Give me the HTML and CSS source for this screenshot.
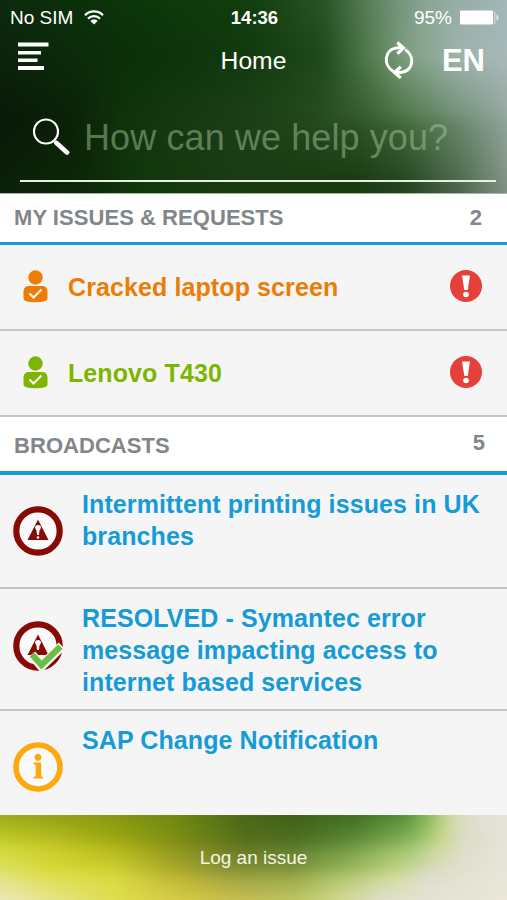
FILE: index.html
```html
<!DOCTYPE html>
<html lang="en">
<head>
    <meta charset="UTF-8">
    <title>Home</title>
    <link rel="stylesheet" href="styles.css">
</head>
<body>
    <header class="header">
        <div class="backdrop">
            <div class="glow header-glow-4"></div>
            <div class="glow header-glow-3"></div>
            <div class="glow header-glow-2"></div>
            <div class="glow header-glow-1"></div>
        </div>

        <div class="status-bar">
            <div class="status-left">
                <span>No SIM</span>
                <svg width="20" height="15" viewBox="0 0 20 15" fill="none" stroke="#fff" stroke-width="2.2">
                    <path d="M1 5.2C6 .2 14 .2 19 5.2"/>
                    <path d="M4 8.6c3.4-3.4 8.600-3.400 12 0"/>
                    <path d="M10 14.500L6.400 11c2-1.900 5.200-1.900 7.200 0z" fill="#fff" stroke="none"/>
                </svg>
            </div>
            <b class="status-time">14:36</b>
            <div class="status-right">
                <span>95%</span>
                <svg width="39" height="15" viewBox="0 0 39 15" fill="#fff">
                    <rect x="0" y="0.500" width="33" height="14" rx="1"/>
                    <path d="M34 1q1.500 0 1.500 2v9q0 2-1.500 2z" opacity=".4"/>
                    <path d="M36.500 4.500q2 1 2 3t-2 3z" opacity=".8"/>
                </svg>
            </div>
        </div>

        <nav class="nav-bar">
            <svg class="menu-icon" width="31" height="29" viewBox="0 0 31 29" fill="#fff">
                <rect y="0.500" width="30.500" height="4"/>
                <rect y="9" width="23" height="3.500"/>
                <rect y="16.500" width="19.500" height="3.500"/>
                <rect y="24" width="26" height="4"/>
            </svg>
            <span class="nav-title">Home</span>
            <div class="nav-right">
                <svg width="30" height="38" viewBox="0 0 30 38" fill="none" stroke="#fff" stroke-width="3">
                    <path d="M9.500 30.500C-1 24.500-.500 8 14 6.800h4"/>
                    <path d="M13.300 1.500l6.200 5.500-6.200 5.700" stroke-width="3.200"/>
                    <path d="M21.300 8.800C31 14.500 30 30 16.500 31.500h-4"/>
                    <path d="M16.800 25.800l-6.200 5.700 6.200 5.500" stroke-width="3.200"/>
                </svg>
                <b class="lang">EN</b>
            </div>
        </nav>

        <div class="search">
            <svg width="38" height="38" viewBox="0 0 38 38" fill="none" stroke="#fff">
                <circle cx="14" cy="13.500" r="12" stroke-width="2.200"/>
                <path d="M22.500 23.500l1.500 1.500" stroke-width="2.500"/>
                <path d="M24.500 25l10.500 9.500" stroke-width="4.600" stroke-linecap="round"/>
            </svg>
            <span>How can we help you?</span>
        </div>
    </header>

    <main>
        <div class="section-title issues-title">
            <span>MY ISSUES &amp; REQUESTS</span>
            <span>2</span>
        </div>
        <div class="issue orange">
            <svg width="26" height="33" viewBox="0 0 26 33" fill="currentColor">
                <circle cx="12.500" cy="7.500" r="7.200"/>
                <path d="M6 16h13q5 0 5.500 5v7.500Q25 32 12.500 32.300 0 32 .500 28.500V21Q1 16 6 16z"/>
                <path d="M6.500 23.500l4 4 8-8" fill="none" stroke="#f5f5f5" stroke-width="2.200"/>
            </svg>
            <span class="issue-name">Cracked laptop screen</span>
            <svg width="32" height="32" viewBox="0 0 32 32">
                <circle cx="16" cy="16" r="16" fill="#e6403b"/>
                <path d="M12 5.500h8l-2.300 14.500h-3.400z" fill="#fff"/>
                <circle cx="16" cy="24.500" r="2.800" fill="#fff"/>
            </svg>
        </div>
        <div class="issue green">
            <svg width="26" height="33" viewBox="0 0 26 33" fill="currentColor">
                <circle cx="12.500" cy="7.500" r="7.200"/>
                <path d="M6 16h13q5 0 5.500 5v7.500Q25 32 12.500 32.300 0 32 .500 28.500V21Q1 16 6 16z"/>
                <path d="M6.500 23.500l4 4 8-8" fill="none" stroke="#f5f5f5" stroke-width="2.200"/>
            </svg>
            <span class="issue-name">Lenovo T430</span>
            <svg width="32" height="32" viewBox="0 0 32 32">
                <circle cx="16" cy="16" r="16" fill="#e6403b"/>
                <path d="M12 5.500h8l-2.300 14.500h-3.400z" fill="#fff"/>
                <circle cx="16" cy="24.500" r="2.800" fill="#fff"/>
            </svg>
        </div>

        <div class="section-title broadcasts-title">
            <span>BROADCASTS</span>
            <span class="count">5</span>
        </div>
        <div class="broadcast printing">
            <svg width="50" height="50" viewBox="0 0 50 50">
                <circle cx="25" cy="25" r="21.700" fill="#fafafa" stroke="#870a05" stroke-width="6.200"/>
                <path d="M25 13.500L35.500 34h-21z" fill="#870a05"/>
                <path d="M22 21.500q0-2.500 3-2.500t3 2.500q0 1-1.500 3L26 29h-2l-.500-4.500q-1.500-2-1.500-3z" fill="#fafafa"/>
                <circle cx="25" cy="31.500" r="1.300" fill="#fafafa"/>
            </svg>
            <p>Intermittent printing issues in UK branches</p>
        </div>
        <div class="broadcast symantec">
            <svg width="52" height="50" viewBox="0 0 52 50">
                <circle cx="25" cy="25" r="21.700" fill="#fafafa" stroke="#870a05" stroke-width="6.200"/>
                <path d="M25 13.500L35.500 34h-21z" fill="#870a05"/>
                <path d="M22 21.500q0-2.500 3-2.500t3 2.500q0 1-1.500 3L26 29h-2l-.500-4.500q-1.500-2-1.500-3z" fill="#fafafa"/>
                <path d="M18.500 33.500l10 11.500L49 25" fill="none" stroke="#f5f5f5" stroke-width="9.500"/>
                <path d="M19 33.500l9.500 10.500L47.500 25.500" fill="none" stroke="#6cbd45" stroke-width="6.200"/>
            </svg>
            <p>RESOLVED - Symantec error message impacting access to internet based services</p>
        </div>
        <div class="broadcast sap">
            <svg width="50" height="50" viewBox="0 0 50 50">
                <circle cx="25" cy="25" r="22" fill="#fafafa" stroke="#ffa80d" stroke-width="5.600"/>
                <circle cx="25" cy="15.300" r="3.400" fill="#ffa80d"/>
                <path d="M20.500 20.500h7.700v13.700l2 1v1.300h-10v-1.300l2.500-1V23l-2.200-1z" fill="#ffa80d"/>
            </svg>
            <p>SAP Change Notification</p>
        </div>
    </main>

    <footer class="footer">
        <div class="backdrop">
            <div class="glow footer-glow-4"></div>
            <div class="glow footer-glow-3"></div>
            <div class="glow footer-glow-2"></div>
            <div class="glow footer-glow-1"></div>
        </div>
        <span>Log an issue</span>
    </footer>
</body>
</html>
```

FILE: styles.css
```css
* {
    box-sizing: border-box;
}
body {
    margin: 0;
    width: 507px;
    height: 900px;
    overflow: hidden;
    display: flex;
    flex-direction: column;
    font-family: "Liberation Sans", Arial, sans-serif;
    background-color: #f5f5f5;
}
svg {
    display: block;
    flex-shrink: 0;
}
p {
    margin: 0;
}

/* blurred background, scaled up so the faded edges are cut off */
.backdrop {
    position: absolute;
    inset: 0;
    filter: blur(4px);
    transform: scale(1.04, 1.1);
}
.footer .backdrop {
    transform: scale(1.04, 1.22);
}
.glow {
    position: absolute;
    top: 0;
    left: 0;
    right: 0;
}

/* header */
.header {
    position: relative;
    overflow: hidden;
    height: 194px;
    color: #fff;
    border-bottom: 1px solid #a9b5a5;
    background: #12380c;
}
.status-bar, .nav-bar, .search {
    position: relative;
}
.header-glow-4 {
    height: 193px;
    background: linear-gradient(90deg, #0b2009 0, #0c2608 80px, #12380c 150px, #1a3a12 230px, #173a10 350px, #234420 400px, #4a664a 450px, #8a9c90 507px);
}
.header-glow-3 {
    height: 193px;
    background: linear-gradient(90deg, #0a1808 0, #0b2008 80px, #10340c 130px, #1c3e18 230px, #24481d 300px, #33582c 360px, #48703f 400px, #6b8a6e 450px, #9aaaa5 507px);
    mask-image: linear-gradient(#000 110px, transparent 180px);
}
.header-glow-2 {
    height: 125px;
    background: linear-gradient(90deg, #0b220b 0, #0c300a 130px, #123a0e 250px, #1f4a1c 320px, #4c7848 360px, #7d9f80 400px, #9fb4ae 450px, #a9b9bb 507px);
    mask-image: linear-gradient(#000 60px, transparent 125px);
}
.header-glow-1 {
    height: 60px;
    background: linear-gradient(90deg, #0d2a0f 0, #0c320b 80px, #0c3a0b 160px, #12400f 250px, #2a5528 320px, #5b7f5c 365px, #8ca598 420px, #a5b7bb 507px);
    mask-image: linear-gradient(#000, transparent 60px);
}
.status-bar {
    display: grid;
    grid-template-columns: 1fr auto 1fr;
    align-items: center;
    height: 35px;
    padding: 0 8px 0 10px;
    font-size: 19px;
}
.status-left, .status-right {
    display: flex;
    align-items: center;
    gap: 11px;
}
.status-right {
    justify-content: flex-end;
    gap: 8px;
}
.status-time {
    font-size: 18.5px;
}
.nav-bar {
    display: grid;
    grid-template-columns: 1fr auto 1fr;
    align-items: center;
    height: 50px;
    padding: 0 22px 0 18px;
}
.menu-icon {
    margin-bottom: 8px;
}
.nav-title {
    padding: 1px 0 0 4px;
    font-size: 24.7px;
}
.nav-right {
    display: flex;
    align-items: center;
    justify-content: flex-end;
    gap: 28px;
}
.lang {
    font-size: 31px;
    padding-top: 2px;
}
.search {
    display: flex;
    align-items: center;
    gap: 14px;
    height: 97px;
    margin: 0 11px 0 20px;
    padding: 8px 0 0 12px;
    border-bottom: 2px solid #e8ede6;
    font-size: 36px;
    letter-spacing: 0.1px;
    color: rgba(165, 195, 155, 0.5);
}
.search span {
    padding-top: 2px;
}

/* lists */
.section-title {
    display: flex;
    justify-content: space-between;
    align-items: center;
    padding: 0 25px 0 14px;
    background-color: #fff;
    border-bottom: 3px solid #189bd7;
    color: #81868a;
    font-size: 22px;
    font-weight: bold;
    letter-spacing: 0.05px;
}
.issues-title {
    height: 51px;
}
.broadcasts-title {
    height: 58px;
    padding-top: 3px;
    padding-right: 22px;
    border-bottom-width: 4px;
}
.count {
    padding-bottom: 6px;
}
.issue {
    display: flex;
    align-items: center;
    height: 86px;
    padding: 0 25px 0 23px;
    border-bottom: 2px solid #c6c7c8;
    font-size: 25px;
    font-weight: bold;
}
.issue svg {
    margin-bottom: 2px;
}
.issue-name {
    flex: 1;
    padding-left: 19px;
    letter-spacing: 0.1px;
}
.orange {
    color: #ec7c05;
}
.green {
    color: #7db500;
}
.broadcast {
    display: flex;
    align-items: center;
    padding: 0 20px 0 13px;
    border-bottom: 2px solid #c1c3c5;
    color: #159bd7;
    font-size: 25px;
    font-weight: bold;
    line-height: 32px;
    letter-spacing: 0.1px;
}
.broadcast p {
    align-self: flex-start;
    width: 406px;
    margin-left: 19px;
    padding-top: 13px;
}
.printing {
    height: 114px;
}
.symantec {
    height: 122px;
}
.symantec svg {
    margin-bottom: 7px;
}
.symantec p {
    margin-left: 17px;
}
.sap {
    height: 104px;
    border-bottom: none;
}
.sap svg {
    margin-top: 8px;
}

/* footer */
.footer {
    position: relative;
    overflow: hidden;
    display: flex;
    justify-content: center;
    height: 85px;
    padding-top: 32px;
    color: #f4f6e8;
    font-size: 19px;
    background: #c8cc40;
}
.footer span {
    position: relative;
}
.footer-glow-4 {
    height: 85px;
    background: linear-gradient(90deg, #eee8c8 0, #e6e490 60px, #dede50 120px, #d8cc48 190px, #c8c058 250px, #c4cc68 300px, #d8dc98 340px, #e0e0d0 375px, #ece8dc 507px);
}
.footer-glow-3 {
    height: 85px;
    background: linear-gradient(90deg, #dfe27a 0, #dede38 60px, #d8d83a 120px, #b8b030 175px, #8f9838 230px, #8a9c40 290px, #a4c060 340px, #cfdc88 390px, #dcdccc 420px, #eae8dc 507px);
    mask-image: linear-gradient(#000 50px, transparent 80px);
}
.footer-glow-2 {
    height: 60px;
    background: linear-gradient(90deg, #d2dc30 0, #c6c828 60px, #aab014 120px, #7d8a18 190px, #5a7020 250px, #55782a 300px, #6a9440 350px, #98c468 405px, #ccd888 430px, #dcdcc8 455px, #e6e6dc 507px);
    mask-image: linear-gradient(#000 28px, transparent 60px);
}
.footer-glow-1 {
    height: 36px;
    background: linear-gradient(90deg, #a0ac18 0, #8b9a10 100px, #6f8812 180px, #4a6a14 240px, #3f5f16 290px, #3f6f20 350px, #5a8f38 400px, #8cba60 423px, #c0d488 437px, #dcdcc4 455px, #e0e0d8 475px, #e4e4d8 507px);
    mask-image: linear-gradient(#000 8px, transparent 36px);
}
```
